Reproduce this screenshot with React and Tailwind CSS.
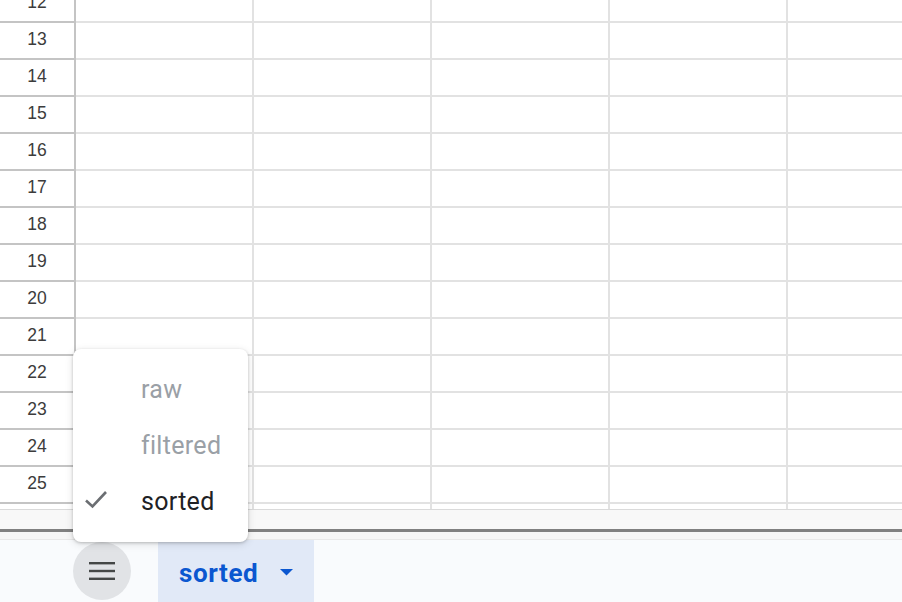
const ROWS = [12, 13, 14, 15, 16, 17, 18, 19, 20, 21, 22, 23, 24, 25, 26]
const COLS = 5

function CheckIcon() {
  return (
    <svg width="24" height="20" viewBox="0 0 24 20" fill="none">
      <path d="M2 11.5 L8.5 17.5 L22 3" stroke="#6b6e72" strokeWidth="2.6" strokeLinecap="butt" strokeLinejoin="miter" />
    </svg>
  )
}

function MenuItem({ label, active }) {
  return (
    <div className="relative flex items-center h-14 pl-[68px]">
      {active && (
        <span className="absolute left-[11px] top-[16px]"><CheckIcon /></span>
      )}
      <span
        className={`text-[25px] leading-none tracking-[0.3px] ${active ? 'text-[#202124]' : 'text-[#9aa0a6]'}`}
        style={{ fontFamily: 'Roboto, "Noto Sans", sans-serif' }}
      >
        {label}
      </span>
    </div>
  )
}

export default function App() {
  return (
    <div className="relative w-[902px] h-[602px] overflow-hidden bg-white">
      <div className="h-[510px] overflow-hidden border-b border-[#dadada]">
        <div className="mt-[-14px]">
          {ROWS.map((r) => (
            <div key={r} className="flex h-[37px]">
              <div
                className="shrink-0 w-[76px] h-[37px] pb-[2px] border-r-2 border-b-2 border-[#c4c4c4] flex items-center justify-center text-[17.5px] text-[#3c3c3c]"
                style={{ fontFamily: '"Liberation Sans", Arial, sans-serif' }}
              >
                {r}
              </div>
              {Array.from({ length: COLS }).map((_, i) => (
                <div key={i} className="shrink-0 w-[178px] h-[37px] border-r-2 border-b-2 border-[#e2e2e2]" />
              ))}
            </div>
          ))}
        </div>
      </div>
      <div className="h-[19px] bg-[#f8f8f8]" />
      <div className="h-[3px] bg-[#808080]" />
      <div className="h-[7px] bg-[#f6f6f6] border-b border-[#e8e8e8] box-content" />
      <div className="h-[62px] bg-[#f9fbfd] flex items-center">
        <div className="ml-[73px] w-[58px] h-[58px] rounded-full bg-[#e1e3e6] flex items-center justify-center">
          <svg width="26" height="18" viewBox="0 0 26 18">
            <rect x="0" y="0" width="26" height="2.4" fill="#444746" />
            <rect x="0" y="7.8" width="26" height="2.4" fill="#444746" />
            <rect x="0" y="15.6" width="26" height="2.4" fill="#444746" />
          </svg>
        </div>
        <div className="ml-[27px] w-[156px] h-full bg-[#e1e9f7] flex items-center pl-[21px] pt-[3px]">
          <span
            className="text-[26px] font-bold leading-none text-[#0b57d0] tracking-[0.6px]"
            style={{ fontFamily: 'Roboto, "Noto Sans", sans-serif' }}
          >
            sorted
          </span>
          <svg className="ml-[22px]" width="13" height="7" viewBox="0 0 13 7">
            <path d="M0 0 L13 0 L6.5 6.5 Z" fill="#0b57d0" />
          </svg>
        </div>
      </div>

      <div className="absolute left-[73px] top-[349px] w-[175px] h-[193px] bg-white rounded-lg shadow-[0_1px_3px_rgba(0,0,0,0.2),0_2px_8px_rgba(0,0,0,0.12)] pt-3">
        <MenuItem label="raw" />
        <MenuItem label="filtered" />
        <MenuItem label="sorted" active />
      </div>
    </div>
  )
}
